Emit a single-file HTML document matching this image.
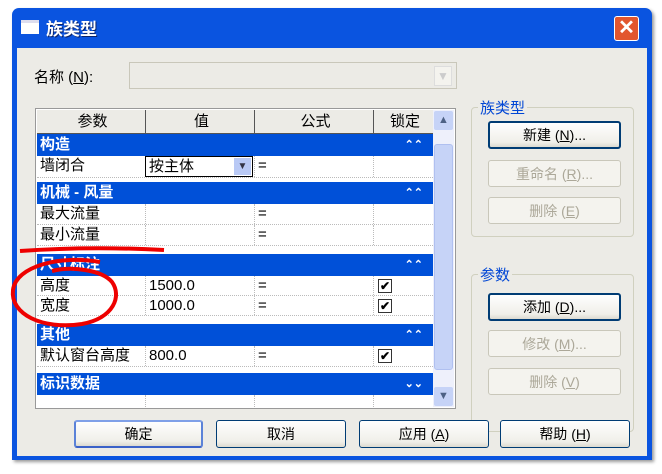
<!DOCTYPE html>
<html><head><meta charset="utf-8"><style>
*{box-sizing:border-box;margin:0;padding:0}
body{width:662px;height:474px;background:#fff;position:relative;overflow:hidden;font-family:"Liberation Sans","Noto Sans CJK SC",sans-serif;font-size:14px;color:#000}
.a{position:absolute}
.win{left:12px;top:8px;width:640px;height:452px;background:#0a54e0;border-radius:7px 7px 0 0;box-shadow:2px 2px 3px #999}
.body{left:17px;top:48px;width:630px;height:408px;background:#ecebe6}
.btn{position:absolute;background:linear-gradient(#fefefe,#f0efe9 80%,#dcdad0);border:1px solid #003c74;border-radius:3px;text-align:center;line-height:26px;font-size:14px}
.dis{border-color:#c9c7ba;color:#aca899;background:#f4f3ee}
.grp{position:absolute;border:1px solid #d0d0bf;border-radius:4px}
.gl{position:absolute;background:#ecebe6;color:#0046d5;font-size:15px;padding:0 2px}
.hdr{position:absolute;left:37px;width:396px;height:22px;background:#0050d8;color:#fff;font-weight:bold;font-size:15px;padding-left:3px;line-height:22px}
.hdr span{position:absolute;right:10px;top:0;font-size:11px}
.row{position:absolute;left:37px;width:396px;background:#fff;border-bottom:1px dotted #bbb;font-size:15px;line-height:20px}
.c{position:absolute;top:0;height:100%;border-left:1px dotted #bbb;padding-left:3px}
.cb{position:absolute;left:341px;top:3px;width:14px;height:14px;border:1px solid #333;background:#fff;font-size:12px;line-height:12px;text-align:center;font-weight:bold}
</style></head><body>
<div class="a win"></div>
<div class="a" style="left:21px;top:20px;width:18px;height:14px;background:#fff;border-top:3px solid #dde"></div>
<div class="a" style="left:46px;top:15px;color:#fff;font-size:17px;font-weight:bold;text-shadow:1px 1px #0a246a">族类型</div>
<div class="a" style="left:614px;top:16px;width:25px;height:25px;background:#e2562e;border:1px solid #fff;border-radius:3px;color:#fff;font-size:20px;line-height:22px;text-align:center;font-weight:bold">✕</div>
<div class="a body"></div>
<div class="a" style="left:34px;top:66px;font-size:15px">名称 (<u>N</u>):</div>
<div class="a" style="left:129px;top:62px;width:328px;height:27px;border:1px solid #c9c7ba;background:#ecebe6"></div>
<div class="a" style="left:434px;top:66px;width:18px;height:20px;background:#f4f3ee;border:1px solid #ddd;color:#ccc;font-size:12px;text-align:center;line-height:18px">▼</div>

<div class="a" style="left:35px;top:108px;width:421px;height:301px;background:#fff;border:1px solid #999"></div>
<div class="a" style="left:37px;top:110px;width:396px;height:24px;background:#ecebe6;border-bottom:1px solid #555;font-size:15px;line-height:24px">
<div class="c" style="left:0;width:108px;text-align:center;border:0">参数</div>
<div class="c" style="left:108px;width:109px;text-align:center;border-left:1px solid #555">值</div>
<div class="c" style="left:217px;width:119px;text-align:center;border-left:1px solid #555">公式</div>
<div class="c" style="left:336px;width:60px;text-align:center;border-left:1px solid #555">锁定</div>
</div>
<div class="hdr" style="top:134px">构造<span>⌃⌃</span></div>
<div class="row" style="top:156px;height:22px"><div class="c" style="left:0;border:0">墙闭合</div><div class="c" style="left:108px;width:108px;border:1px solid #000;background:#fff">按主体<div class="a" style="right:1px;top:1px;width:17px;height:17px;background:#b9c9f5;font-size:10px;text-align:center;line-height:17px;color:#334">▼</div></div><div class="c" style="left:217px">=</div><div class="c" style="left:336px"></div></div>
<div class="hdr" style="top:182px">机械 - 风量<span>⌃⌃</span></div>
<div class="row" style="top:204px;height:21px"><div class="c" style="left:0;border:0">最大流量</div><div class="c" style="left:108px"></div><div class="c" style="left:217px">=</div><div class="c" style="left:336px"></div></div>
<div class="row" style="top:225px;height:21px"><div class="c" style="left:0;border:0">最小流量</div><div class="c" style="left:108px"></div><div class="c" style="left:217px">=</div><div class="c" style="left:336px"></div></div>
<div class="hdr" style="top:254px">尺寸标注<span>⌃⌃</span></div>
<div class="row" style="top:276px;height:20px"><div class="c" style="left:0;border:0">高度</div><div class="c" style="left:108px">1500.0</div><div class="c" style="left:217px">=</div><div class="c" style="left:336px"></div><div class="cb">✔</div></div>
<div class="row" style="top:296px;height:20px"><div class="c" style="left:0;border:0">宽度</div><div class="c" style="left:108px">1000.0</div><div class="c" style="left:217px">=</div><div class="c" style="left:336px"></div><div class="cb">✔</div></div>
<div class="hdr" style="top:324px">其他<span>⌃⌃</span></div>
<div class="row" style="top:346px;height:21px"><div class="c" style="left:0;border:0">默认窗台高度</div><div class="c" style="left:108px">800.0</div><div class="c" style="left:217px">=</div><div class="c" style="left:336px"></div><div class="cb">✔</div></div>
<div class="hdr" style="top:373px">标识数据<span>⌄⌄</span></div>
<div class="row" style="top:395px;height:12px;border:0"><div class="c" style="left:108px"></div><div class="c" style="left:217px"></div><div class="c" style="left:336px"></div></div>
<div class="a" style="left:433px;top:110px;width:21px;height:297px;background:#eef0fb"></div>
<div class="a" style="left:434px;top:111px;width:19px;height:19px;background:#c6d3f7;border-radius:2px;font-size:11px;text-align:center;line-height:19px;color:#4d6185">▲</div>
<div class="a" style="left:434px;top:144px;width:19px;height:226px;background:#c6d3f7;border:1px solid #b0c0f0;border-radius:3px"></div>
<div class="a" style="left:434px;top:387px;width:19px;height:19px;background:#c6d3f7;border-radius:2px;font-size:11px;text-align:center;line-height:19px;color:#4d6185">▼</div>

<div class="grp" style="left:471px;top:107px;width:163px;height:130px"></div>
<div class="gl" style="left:478px;top:97px">族类型</div>
<div class="btn" style="left:488px;top:121px;width:133px;height:28px;border-width:2px;line-height:24px">新建 (<u>N</u>)...</div>
<div class="btn dis" style="left:488px;top:160px;width:133px;height:27px">重命名 (<u>R</u>)...</div>
<div class="btn dis" style="left:488px;top:197px;width:133px;height:27px">删除 (<u>E</u>)</div>
<div class="grp" style="left:471px;top:274px;width:163px;height:158px"></div>
<div class="gl" style="left:478px;top:264px">参数</div>
<div class="btn" style="left:488px;top:293px;width:133px;height:28px;border-width:2px;line-height:24px">添加 (<u>D</u>)...</div>
<div class="btn dis" style="left:488px;top:330px;width:133px;height:27px">修改 (<u>M</u>)...</div>
<div class="btn dis" style="left:488px;top:368px;width:133px;height:27px">删除 (<u>V</u>)</div>

<div class="btn" style="left:74px;top:420px;width:129px;height:28px;border-width:2px;border-color:#7fa0e8 #5b82d8 #3b62c8;line-height:24px">确定</div>
<div class="btn" style="left:216px;top:420px;width:130px;height:28px">取消</div>
<div class="btn" style="left:359px;top:420px;width:130px;height:28px">应用 (<u>A</u>)</div>
<div class="btn" style="left:500px;top:420px;width:130px;height:28px">帮助 (<u>H</u>)</div>

<svg class="a" style="left:0;top:0" width="662" height="474">
<path d="M20 251 Q90 246 164 250" stroke="#e00" stroke-width="4" fill="none"/>
<path d="M100 262 C60 255 16 266 13 290 C10 314 42 330 82 324 C114 318 122 296 112 282 C102 270 72 266 52 271" stroke="#e00" stroke-width="4" fill="none"/>
</svg>
</body></html>
